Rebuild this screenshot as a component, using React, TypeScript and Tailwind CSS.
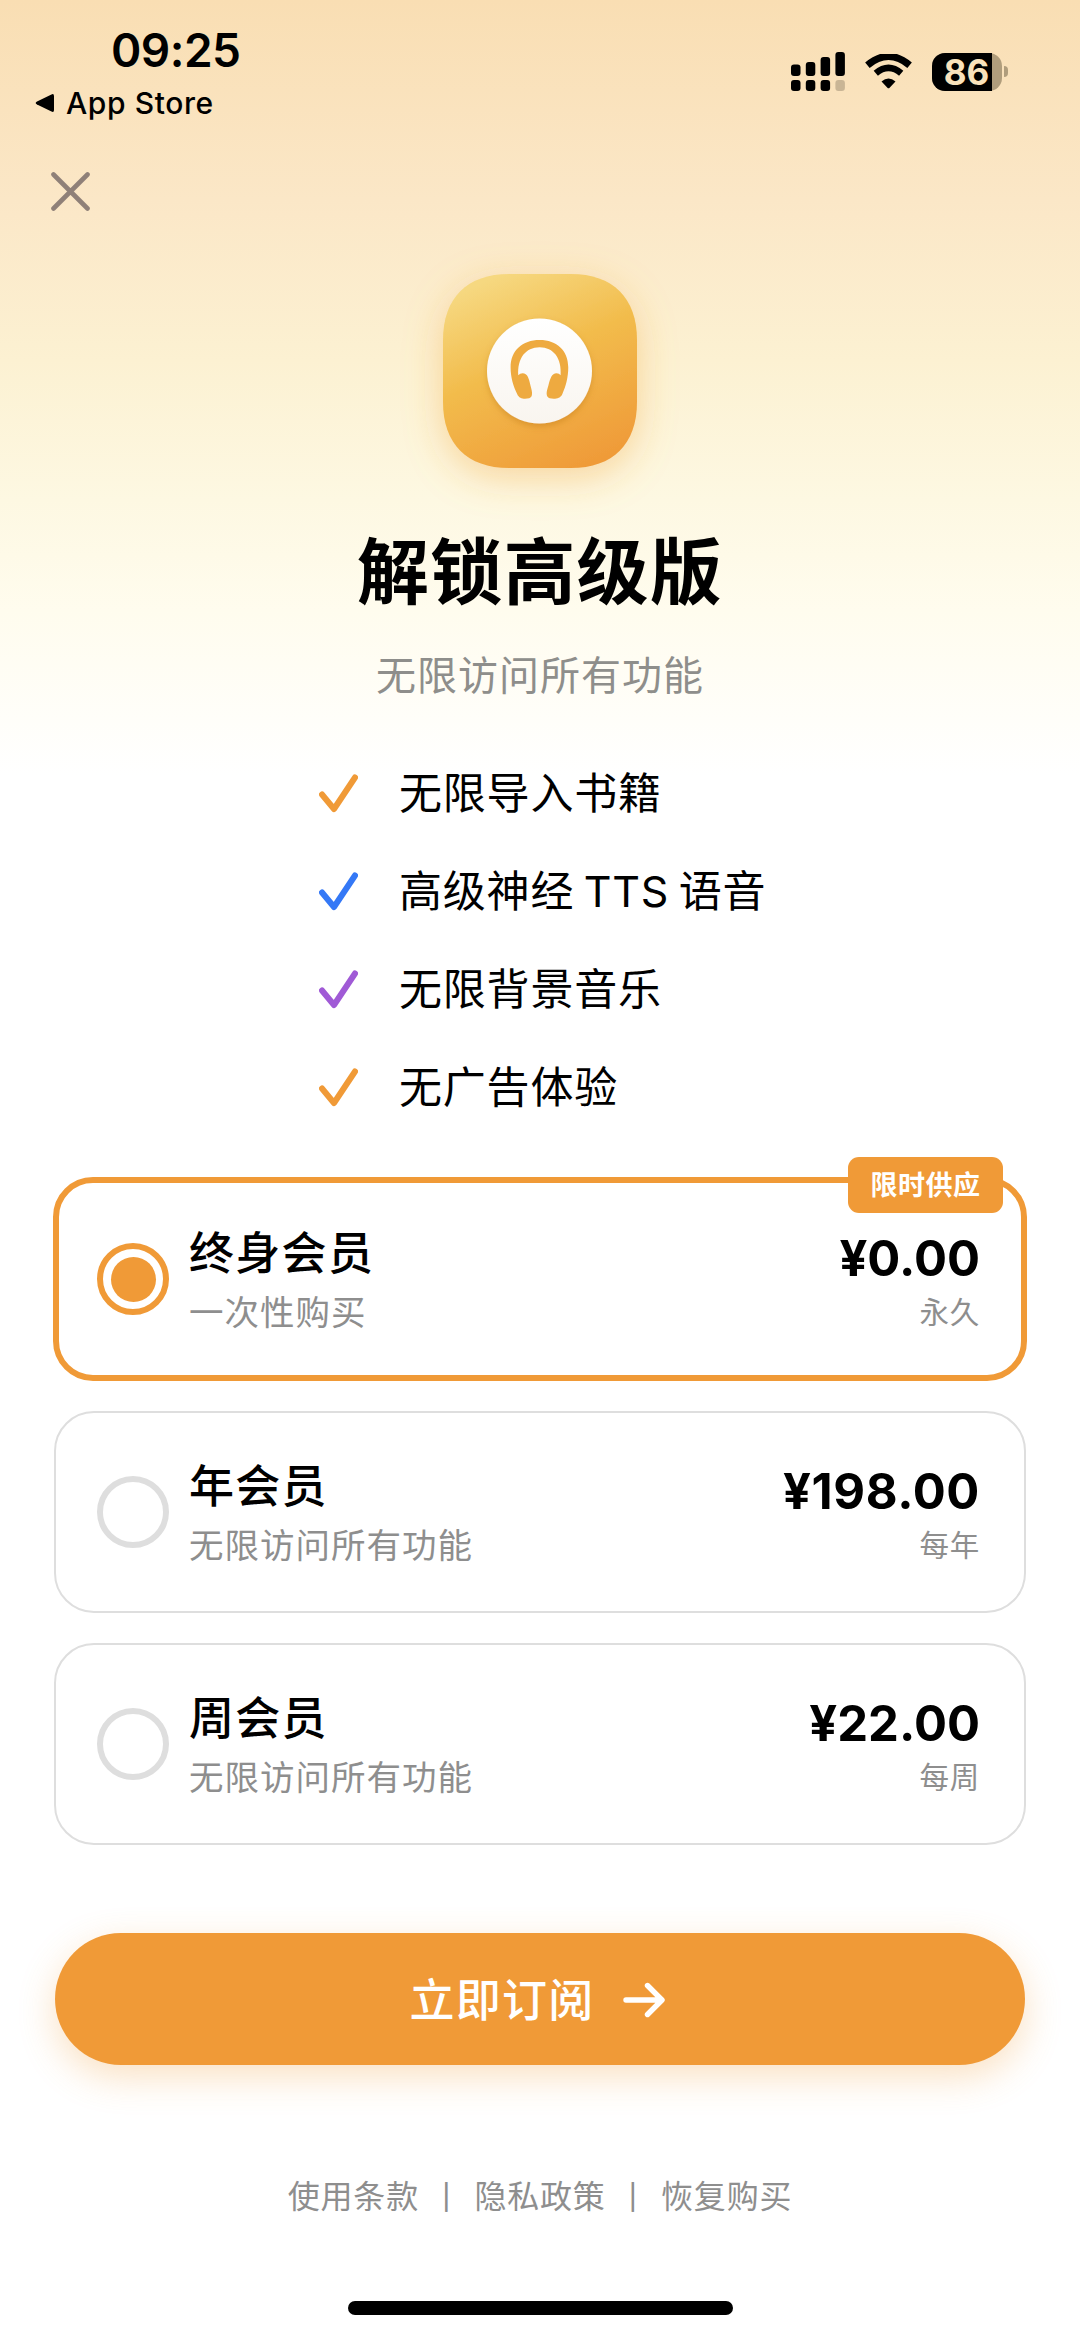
import React, { useState } from 'react';

interface Plan {
  id: string;
  name: string;
  description: string;
  price: string;
  priceTracking: string;
  period: string;
  badge?: string;
}

const PLANS: Plan[] = [
  { id: 'lifetime', name: '终身会员', description: '一次性购买', price: '¥0.00', priceTracking: 'tracking-normal', period: '永久', badge: '限时供应' },
  { id: 'yearly', name: '年会员', description: '无限访问所有功能', price: '¥198.00', priceTracking: 'tracking-[0.6px]', period: '每年' },
  { id: 'weekly', name: '周会员', description: '无限访问所有功能', price: '¥22.00', priceTracking: 'tracking-normal', period: '每周' },
];

const FEATURES = [
  { text: '无限导入书籍', color: 'text-[#f09a37]' },
  { text: '高级神经 TTS 语音', color: 'text-[#3478f6]' },
  { text: '无限背景音乐', color: 'text-[#a05ad6]' },
  { text: '无广告体验', color: 'text-[#f09a37]' },
];

function StatusBar() {
  return (
    <div className="flex h-[130px] items-start justify-between">
      <div className="pt-[22px] pl-[35px]">
        <div className="pl-[76px] text-[46px] leading-[56px] font-semibold tracking-[-0.5px]">09:25</div>
        <div className="mt-[2px] flex h-[46px] items-center gap-[11px]">
          <svg width="20" height="20" viewBox="0 0 20 20">
            <path d="M2 8.6 L16.5 1.4 Q19 0.4 19 3 V17 Q19 19.6 16.5 18.6 L2 11.4 Q-0.6 10 2 8.6 Z" />
          </svg>
          <span className="text-[30px] leading-[46px] font-medium tracking-[0.6px]">App Store</span>
        </div>
      </div>

      <div className="flex items-center pt-[52px] pr-[72px]">
        {/* Dual SIM signal */}
        <svg width="54" height="39" viewBox="0 0 54 39">
          <rect x="0" y="12.5" width="9.5" height="11.5" rx="3" />
          <rect x="14.8" y="10" width="9.5" height="14" rx="3" />
          <rect x="29.6" y="5" width="9.5" height="19" rx="3" />
          <rect x="44.4" y="0" width="9.5" height="24" rx="3" />
          <rect x="0" y="28" width="9.5" height="11" rx="3" />
          <rect x="14.8" y="28" width="9.5" height="11" rx="3" />
          <rect x="29.6" y="28" width="9.5" height="11" rx="3" />
          <rect x="44.4" y="28" width="9.5" height="11" rx="3" fill="#c9b595" />
        </svg>
        <svg className="ml-[20px]" width="47" height="35" viewBox="0 0 47 35">
          <path d="M2.4 11.2 Q23.5 -6.5 44.6 11.2" fill="none" stroke="#000" strokeWidth="7" />
          <path d="M10.8 19.2 Q23.5 8.5 36.2 19.2" fill="none" stroke="#000" strokeWidth="6.6" />
          <path d="M16.5 27.4 Q23.5 21.6 30.5 27.4 L24.6 33.8 Q23.5 34.8 22.4 33.8 Z" />
        </svg>
        <div className="ml-[20px] flex h-[38px] w-[70px] items-center rounded-[13px] bg-[#b09d7c]">
          <div className="flex h-[38px] w-[60px] items-center justify-center rounded-l-[13px] bg-black pl-[9px] text-[35px] leading-[38px] font-bold text-[#f9e2bb]">
            86
          </div>
        </div>
        <div className="ml-[2px] h-[11px] w-[4px] rounded-r-full bg-[#b09d7c]" />
      </div>
    </div>
  );
}

function AppIcon() {
  return (
    <svg className="overflow-visible" width="194" height="194" viewBox="0 0 194 194">
      <defs>
        <linearGradient id="tile" x1="0.3" y1="0" x2="0.75" y2="1">
          <stop offset="0" stopColor="#f6d880" />
          <stop offset="0.42" stopColor="#f2bc4c" />
          <stop offset="1" stopColor="#ef9a38" />
        </linearGradient>
        <linearGradient id="disc" x1="0" y1="0" x2="0" y2="1">
          <stop offset="0" stopColor="#ffffff" />
          <stop offset="1" stopColor="#f9f5ef" />
        </linearGradient>
        <filter id="glow" x="-50%" y="-50%" width="200%" height="200%">
          <feDropShadow dx="0" dy="10" stdDeviation="19" floodColor="#f0a030" floodOpacity="0.38" />
        </filter>
        <filter id="soft" x="-30%" y="-30%" width="160%" height="160%">
          <feDropShadow dx="0" dy="3" stdDeviation="3" floodColor="#a86000" floodOpacity="0.3" />
        </filter>
      </defs>
      <path
        d="M0 66 C0 24 24 0 66 0 H128 C170 0 194 24 194 66 V128 C194 170 170 194 128 194 H66 C24 194 0 170 0 128 Z"
        fill="url(#tile)"
        filter="url(#glow)"
      />
      <circle cx="96.5" cy="97" r="52.5" fill="url(#disc)" filter="url(#soft)" />
      {/* Headphones */}
      <g transform="translate(-43.4 -44) scale(0.33333)">
        <path
          d="M353 493 C341 468 333 442 333 412 C333 362 368 330 420 330 S506 362 506 412 C506 442 499 468 488 493 C482 507 464 508 450 505 C438 500 440 486 446 468 C452 446 456 430 471 430 Q479 430 483 436 C487 385 462 352 420 352 S353 385 356 436 Q361 430 369 430 C384 430 388 446 393 468 C399 488 400 500 389 505 C374 508 359 507 353 493 Z"
          fill="#eeaa40"
        />
      </g>
    </svg>
  );
}

function PlanCard({ plan, selected, onSelect }: { plan: Plan; selected: boolean; onSelect: () => void }) {
  return (
    <button
      onClick={onSelect}
      className={`relative flex items-center text-left rounded-[40px] ${
        selected
          ? 'mx-[53px] h-[204px] border-[6px] border-[#f09a37] pl-[38px] pr-[41px]'
          : 'mx-[54px] h-[202px] border-2 border-[#dedede] pl-[41px] pr-[44px]'
      }`}
    >
      {plan.badge && (
        <span className="absolute -top-[26px] right-[18px] flex h-[56px] w-[155px] items-center justify-center rounded-[11px] bg-[#f09a37] pt-[2px] text-[27px] leading-[54px] font-bold tracking-[0.5px] text-white">
          {plan.badge}
        </span>
      )}
      <span
        className={`flex size-[72px] items-center justify-center rounded-full border-[6px] ${
          selected ? 'border-[#f09a37]' : 'border-[#dedede]'
        }`}
      >
        {selected && <span className="size-[45px] rounded-full bg-[#f09a37]" />}
      </span>
      <span className="mt-[5px] ml-[20px] flex flex-1 flex-col">
        <span className="text-[45px] leading-[63px] font-medium tracking-[1.3px]">{plan.name}</span>
        <span className="text-[34.5px] leading-[56px] tracking-[1px] text-[#8e8e8e]">{plan.description}</span>
      </span>
      <span className="flex flex-col items-end">
        <span className={`mt-[7px] text-[49px] leading-[60px] font-bold ${plan.priceTracking}`}>{plan.price}</span>
        <span className="text-[29.5px] leading-[47px] tracking-[0.8px] text-[#8e8e8e]">{plan.period}</span>
      </span>
    </button>
  );
}

export default function App() {
  const [selected, setSelected] = useState('lifetime');

  return (
    <div className="flex h-[2337px] w-[1080px] flex-col overflow-hidden bg-white bg-[linear-gradient(180deg,#f9deb3_0px,#fbe7c7_200px,#fcf1d2_360px,#fdf8e2_500px,#fffcee_610px,#ffffff_775px)] font-['Inter','Noto_Sans_CJK_SC',sans-serif] text-black">
      <StatusBar />

      {/* Close */}
      <button className="mt-[42px] ml-[51px] size-[39px]">
        <svg width="39" height="39" viewBox="0 0 39 39">
          <path d="M2.5 2.5 L36.5 36.5 M36.5 2.5 L2.5 36.5" fill="none" stroke="#8f8078" strokeWidth="4.6" strokeLinecap="round" />
        </svg>
      </button>

      <div className="mt-[63px] flex flex-col items-center">
        <AppIcon />
        <h1 className="mt-[64px] text-[72px] leading-[80px] font-bold tracking-[1.2px]">解锁高级版</h1>
        <p className="mt-[39px] text-[40px] leading-[50px] tracking-[1px] text-[#8e8e8b]">无限访问所有功能</p>
      </div>

      {/* Features */}
      <ul className="mt-[43px] ml-[319px]">
        {FEATURES.map((feature) => (
          <li key={feature.text} className="flex h-[98px] items-center gap-[41px]">
            <svg className={feature.color} width="39" height="39" viewBox="0 0 39 39">
              <path
                d="M3 20.5 L15 35 L36 3.5"
                fill="none"
                stroke="currentColor"
                strokeWidth="6"
                strokeLinecap="round"
                strokeLinejoin="round"
              />
            </svg>
            <span className="text-[43px] leading-[60px] tracking-[0.8px] [word-spacing:-3.4px]">{feature.text}</span>
          </li>
        ))}
      </ul>

      {/* Plans */}
      <div className="mt-[41px] flex flex-col gap-[30px]">
        {PLANS.map((plan) => (
          <PlanCard key={plan.id} plan={plan} selected={selected === plan.id} onSelect={() => setSelected(plan.id)} />
        ))}
      </div>

      {/* Subscribe */}
      <button className="mx-[55px] mt-[88px] flex h-[132px] shrink-0 items-center justify-center gap-[29px] rounded-full bg-[#f09a37] pr-[5px] text-white shadow-[0_12px_36px_rgba(240,154,55,0.3)]">
        <span className="pt-[3px] text-[45px] leading-[60px] font-medium tracking-[1.2px]">立即订阅</span>
        <svg className="mt-[2px]" width="42" height="36" viewBox="0 0 42 36">
          <path
            d="M3 18 H38 M24.5 3.5 L39 18 L24.5 32.5"
            fill="none"
            stroke="currentColor"
            strokeWidth="5.4"
            strokeLinecap="round"
            strokeLinejoin="round"
          />
        </svg>
      </button>

      {/* Legal links */}
      <div className="mt-[112px] flex items-center justify-center gap-[23px] text-[32px] leading-[40px] tracking-[0.8px] text-[#8e8e8e]">
        <span>使用条款</span>
        <span className="text-[25px] font-medium">|</span>
        <span>隐私政策</span>
        <span className="text-[25px] font-medium">|</span>
        <span>恢复购买</span>
      </div>

      {/* Home indicator */}
      <div className="mt-[84px] h-[14px] w-[385px] shrink-0 self-center rounded-full bg-black" />
    </div>
  );
}
